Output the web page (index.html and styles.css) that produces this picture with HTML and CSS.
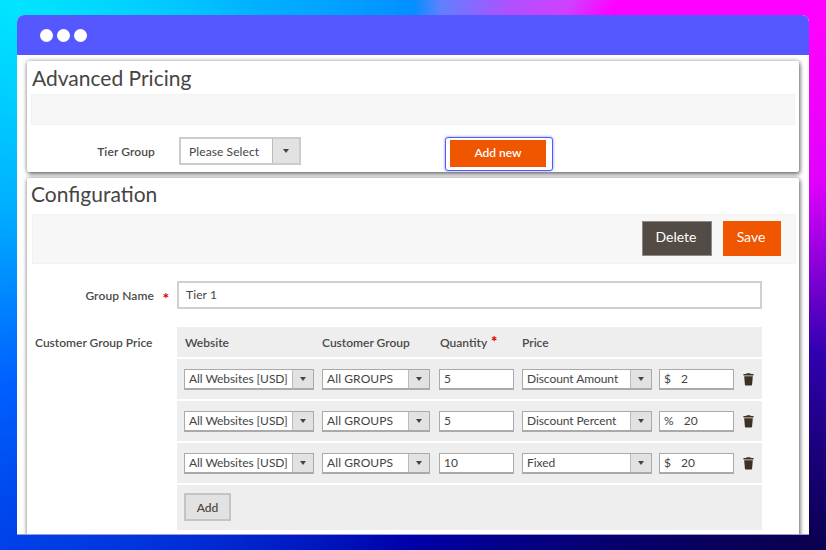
FILE: index.html
```html
<!DOCTYPE html>
<html lang="en">
<head>
<meta charset="utf-8">
<title>Advanced Pricing</title>
<link rel="stylesheet" href="styles.css">
</head>
<body>
<div class="window">
  <header class="titlebar"><i class="dot"></i><i class="dot"></i><i class="dot"></i></header>
  <div class="content">
    <section class="panel panel-top">
      <h1 class="title">Advanced Pricing</h1>
      <div class="toolbar toolbar-empty"></div>
      <div class="tier-row">
        <label class="tier-label">Tier Group</label>
        <div class="select select-tier"><span class="select-text">Please Select</span><span class="select-arrow"></span></div>
        <div class="focus-ring"><button class="btn btn-add-new">Add new</button></div>
      </div>
    </section>
    <section class="panel panel-config">
      <h2 class="title title-config">Configuration</h2>
      <div class="toolbar toolbar-actions">
        <button class="btn btn-delete">Delete</button>
        <button class="btn btn-save">Save</button>
      </div>
      <div class="name-row">
        <label class="name-label">Group Name</label><span class="star">*</span>
        <input class="name-input" type="text" value="Tier 1">
      </div>
      <div class="price-row">
        <div class="price-label">Customer Group Price</div>
        <div class="price-table">
          <div class="grid-row head">
            <span>Website</span><span>Customer Group</span><span>Quantity <b class="star-inline">*</b></span><span>Price</span>
          </div>
          <div class="grid-row item">
            <div class="select s-web"><span class="select-text">All Websites [USD]</span><span class="select-arrow"></span></div>
            <div class="select s-group"><span class="select-text">All GROUPS</span><span class="select-arrow"></span></div>
            <input class="field" type="text" value="5">
            <div class="select s-price"><span class="select-text">Discount Amount</span><span class="select-arrow"></span></div>
            <div class="field amount"><span class="unit">$</span><span>2</span></div>
            <svg class="trash" viewBox="0 0 12 14"><path d="M4 0.6h4l0.5 1H11.5v1.6H0.5V1.6H3.5z M1.3 4H10.7L9.9 13.2Q9.8 14 9 14H3Q2.2 14 2.1 13.2z"/></svg>
          </div>
          <div class="grid-row item">
            <div class="select s-web"><span class="select-text">All Websites [USD]</span><span class="select-arrow"></span></div>
            <div class="select s-group"><span class="select-text">All GROUPS</span><span class="select-arrow"></span></div>
            <input class="field" type="text" value="5">
            <div class="select s-price"><span class="select-text">Discount Percent</span><span class="select-arrow"></span></div>
            <div class="field amount"><span class="unit">%</span><span>20</span></div>
            <svg class="trash" viewBox="0 0 12 14"><path d="M4 0.6h4l0.5 1H11.5v1.6H0.5V1.6H3.5z M1.3 4H10.7L9.9 13.2Q9.8 14 9 14H3Q2.2 14 2.1 13.2z"/></svg>
          </div>
          <div class="grid-row item">
            <div class="select s-web"><span class="select-text">All Websites [USD]</span><span class="select-arrow"></span></div>
            <div class="select s-group"><span class="select-text">All GROUPS</span><span class="select-arrow"></span></div>
            <input class="field" type="text" value="10">
            <div class="select s-price"><span class="select-text">Fixed</span><span class="select-arrow"></span></div>
            <div class="field amount"><span class="unit">$</span><span>20</span></div>
            <svg class="trash" viewBox="0 0 12 14"><path d="M4 0.6h4l0.5 1H11.5v1.6H0.5V1.6H3.5z M1.3 4H10.7L9.9 13.2Q9.8 14 9 14H3Q2.2 14 2.1 13.2z"/></svg>
          </div>
          <div class="add-row"><button class="btn btn-add">Add</button></div>
        </div>
      </div>
    </section>
  </div>
</div>
</body>
</html>
```
FILE: styles.css
```css
* { box-sizing: border-box; }
html, body { margin: 0; height: 100%; }
body {
  width: 826px;
  height: 550px;
  overflow: hidden;
  padding: 15px 17px;
  font-family: "Lato", "Noto Sans", sans-serif;
  color: #444;
  background: conic-gradient(from 0deg at 413px 275px,
    #0090ff 0deg, #6080ff 6deg, #b050ff 20deg, #d040ff 30deg, #ff00ff 37deg, #ff00ff 58deg, #e000ff 77deg,
    #3000b0 101deg, #0a0050 124deg, #0000a8 180deg, #0040e8 236deg,
    #0060ff 255deg, #00b0ff 280deg, #00e5ff 304deg, #00b0ff 330deg, #0090ff 360deg);
}
.window {
  width: 792px;
  height: 519px;
  border-radius: 7px 7px 0 0;
  overflow: hidden;
  background: #fff;
  box-shadow: 0 1px 0 #9a9ad8;
}
.titlebar {
  height: 40px;
  background: #5558ff;
  display: flex;
  align-items: center;
  gap: 4px;
  padding-left: 23px;
}
.dot { width: 13px; height: 13px; border-radius: 50%; background: #fff; }
.content { padding: 6px 10px 0; }
.panel {
  background: #fff;
  border-radius: 2px;
  box-shadow: 0 0 5px rgba(0,0,0,.3), 1px 2px 4px rgba(0,0,0,.5);
}
.panel-top { height: 111px; padding: 4px 4px 0; margin-bottom: 6px; }
.panel-config { height: 362px; padding: 3px 3px 0 5px; }
.title {
  margin: 0;
  font-weight: 400;
  font-size: 21px;
  line-height: 26px;
  color: #454545;
  padding-left: 1px;
}
.title-config { margin-left: -2px; }
.toolbar { background: #f7f7f7; border: 1px solid #f2f2f2; }
.toolbar-empty { height: 31px; margin-top: 3px; }
.tier-row { display: flex; align-items: center; height: 38px; margin-top: 7px; }
.tier-label {
  width: 124px;
  text-align: right;
  font-size: 12px;
  font-weight: 600;
  color: #4a4a4a;
  letter-spacing: .1px;
}
.select {
  display: flex;
  align-items: stretch;
  height: 21px;
  background: #fff;
  border: 1px solid #aaa;
  border-bottom-width: 2px;
  font-size: 12px;
  color: #444;
}
.select-text {
  flex: 1;
  display: flex;
  align-items: center;
  padding-left: 4px;
  letter-spacing: .1px;
  white-space: nowrap;
}
.s-web .select-text, .s-price .select-text { letter-spacing: -.07px; }
.select-arrow {
  width: 21px;
  background: #e2e2e2;
  border-left: 1px solid #bbb;
  display: flex;
  align-items: center;
  justify-content: center;
}
.select-arrow::after {
  content: "";
  border-left: 3.5px solid transparent;
  border-right: 3.5px solid transparent;
  border-top: 4px solid #444;
}
.select-tier {
  width: 122px;
  height: 28px;
  margin-left: 24px;
  border: 2px solid #ccc;
}
.select-tier .select-text { padding-left: 8px; }
.select-tier .select-arrow { width: 27px; }
.focus-ring {
  margin: 6px 0 0 144px;
  width: 108px;
  height: 34px;
  padding: 2px 6px 3px 4px;
  border: 1px solid #5558ff;
  border-radius: 3px;
  box-shadow: 0 0 3px #8a8cff;
  background: #fff;
}
.btn {
  border: 0;
  font-family: inherit;
  color: #fff;
  cursor: pointer;
  padding: 0;
}
.btn-add-new {
  width: 96px;
  height: 27px;
  background: #f05500;
  font-size: 12px;
  font-weight: 600;
  padding-bottom: 2px;
}
.toolbar-actions {
  height: 50px;
  margin-top: 7px;
  display: flex;
  justify-content: flex-end;
  align-items: flex-start;
  gap: 11px;
  padding: 6px 14px 0 0;
}
.btn-delete, .btn-save { height: 35px; font-size: 14px; padding: 0 2px 5px 0; }
.btn-delete { width: 70px; background: #534c46; border: 1px solid #908a85; }
.btn-save { width: 58px; background: #f05500; }
.name-row { display: flex; align-items: center; height: 28px; margin-top: 17px; }
.name-label {
  width: 122px;
  text-align: right;
  font-size: 12px;
  font-weight: 600;
  color: #4a4a4a;
  letter-spacing: .1px;
}
.star { width: 23px; padding: 6px 0 0 1px; text-align: center; color: #e00000; font-size: 16px; line-height: 16px; font-weight: 700; }
.name-input {
  width: 585px;
  height: 28px;
  border: 2px solid #d0d0d0;
  padding: 0 7px 2px;
  font: 12px "Lato", sans-serif;
  letter-spacing: .1px;
  color: #444;
  outline: 0;
}
.price-row { display: flex; margin-top: 18px; }
.price-label {
  width: 145px;
  padding: 8px 0 0 3px;
  font-size: 12px;
  font-weight: 600;
  color: #4a4a4a;
}
.price-table { width: 585px; display: flex; flex-direction: column; gap: 2px; }
.grid-row {
  display: grid;
  grid-template-columns: 138px 117px 83px 137px 75px 1fr;
  align-items: center;
  padding-left: 7px;
  background: #eee;
}
.head {
  height: 30px;
  font-size: 12px;
  font-weight: 600;
  color: #4a4a4a;
  padding-left: 8px;
  grid-template-columns: 137px 118px 82px 137px 75px 1fr;
}
.star-inline { color: #e00000; margin-left: 1px; font-size: 15px; line-height: 12px; }
.item { height: 40px; }
.s-web { width: 130px; }
.s-group { width: 108px; }
.s-price { width: 130px; }
.field {
  width: 75px;
  height: 21px;
  background: #fff;
  border: 1px solid #aaa;
  border-bottom-width: 2px;
  padding: 0 4px;
  font: 12px "Lato", sans-serif;
  letter-spacing: .1px;
  color: #444;
  outline: 0;
}
.amount { display: flex; align-items: center; gap: 10px; }
.unit { min-width: 6px; }
.trash { width: 11px; height: 14px; margin-left: 9px; fill: #3d3024; }
.add-row { height: 45px; background: #eee; padding: 8px 0 0 7px; }
.btn-add {
  width: 47px;
  height: 28px;
  background: #e2e2e2;
  border: 2px solid #c4c4c4;
  color: #534c46;
  font-size: 12px;
  font-weight: 600;
}
```
